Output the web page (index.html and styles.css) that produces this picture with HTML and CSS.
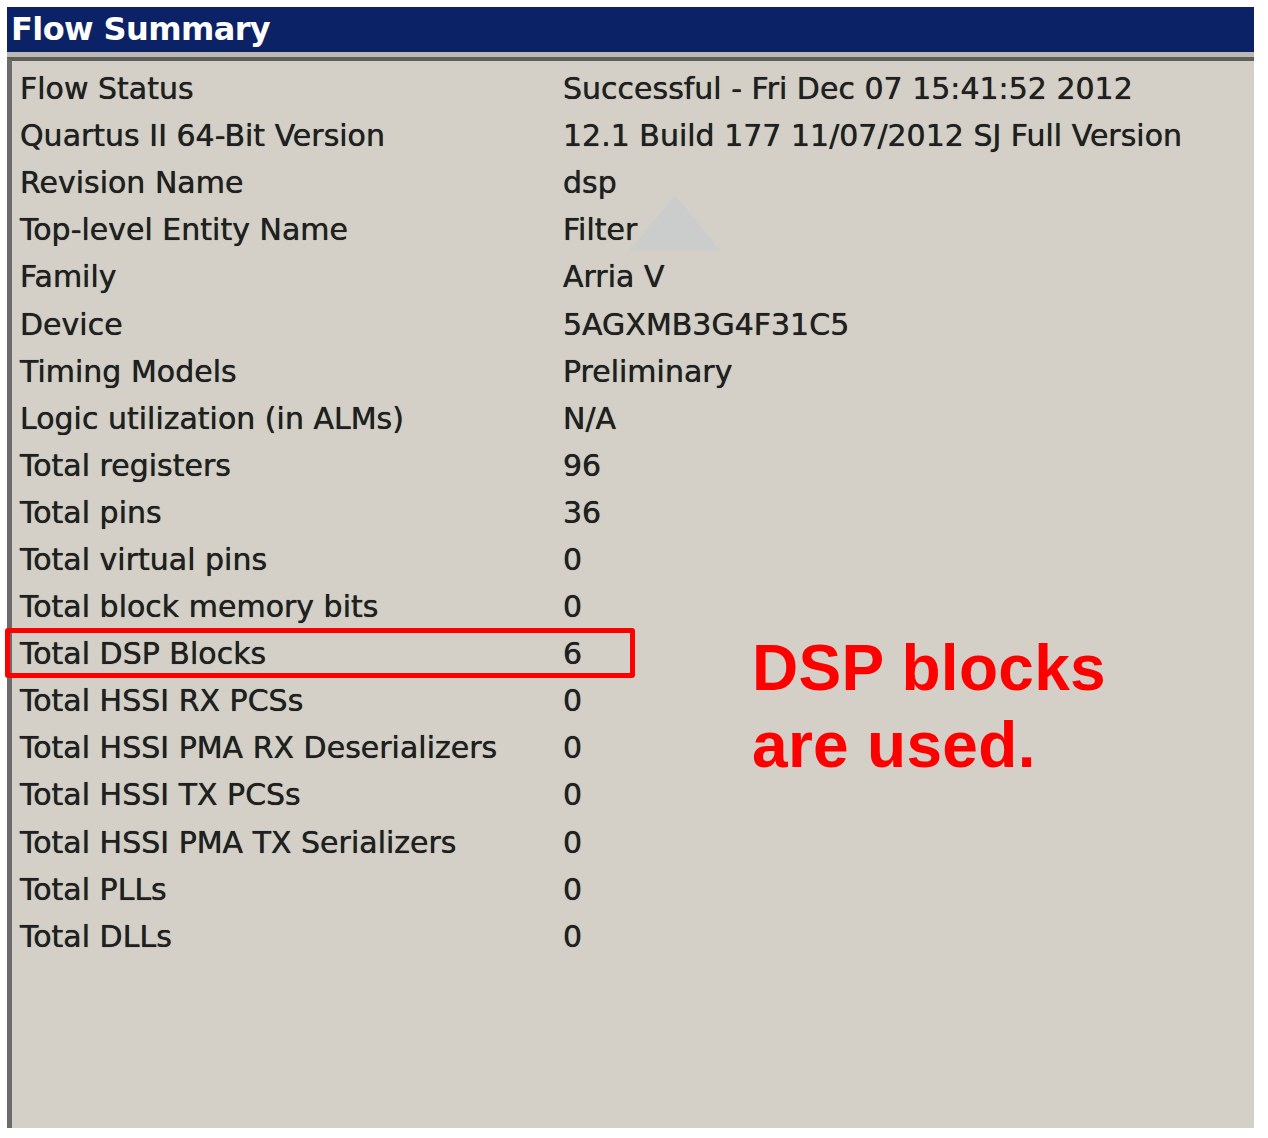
FILE: index.html
```html
<!DOCTYPE html>
<html>
<head>
<meta charset="utf-8">
<link rel="stylesheet" href="styles.css">
</head>
<body>
<div class="window">
  <div class="titlebar">Flow Summary</div>
  <div class="panel">
    <div class="table">
      <div class="row"><span class="label">Flow Status</span><span class="value">Successful - Fri Dec 07 15:41:52 2012</span></div>
      <div class="row"><span class="label">Quartus II 64-Bit Version</span><span class="value">12.1 Build 177 11/07/2012 SJ Full Version</span></div>
      <div class="row"><span class="label">Revision Name</span><span class="value">dsp</span></div>
      <div class="row"><span class="label">Top-level Entity Name</span><span class="value value-marked">Filter<span class="tri"></span></span></div>
      <div class="row"><span class="label">Family</span><span class="value">Arria V</span></div>
      <div class="row"><span class="label">Device</span><span class="value">5AGXMB3G4F31C5</span></div>
      <div class="row"><span class="label">Timing Models</span><span class="value">Preliminary</span></div>
      <div class="row"><span class="label">Logic utilization (in ALMs)</span><span class="value">N/A</span></div>
      <div class="row"><span class="label">Total registers</span><span class="value">96</span></div>
      <div class="row"><span class="label">Total pins</span><span class="value">36</span></div>
      <div class="row"><span class="label">Total virtual pins</span><span class="value">0</span></div>
      <div class="row"><span class="label">Total block memory bits</span><span class="value">0</span></div>
      <div class="row row-highlight"><span class="label">Total DSP Blocks</span><span class="value">6</span>
        <div class="note">DSP blocks<br>are used.</div>
      </div>
      <div class="row"><span class="label">Total HSSI RX PCSs</span><span class="value">0</span></div>
      <div class="row"><span class="label">Total HSSI PMA RX Deserializers</span><span class="value">0</span></div>
      <div class="row"><span class="label">Total HSSI TX PCSs</span><span class="value">0</span></div>
      <div class="row"><span class="label">Total HSSI PMA TX Serializers</span><span class="value">0</span></div>
      <div class="row"><span class="label">Total PLLs</span><span class="value">0</span></div>
      <div class="row"><span class="label">Total DLLs</span><span class="value">0</span></div>
    </div>
  </div>
</div>
</body>
</html>
```
FILE: styles.css
```css
html, body {
  margin: 0;
  padding: 0;
  background: #ffffff;
}
.window {
  margin: 7px 0 0 7px;
  width: 1247px;
}
.titlebar {
  background: #0b2267;
  color: #ffffff;
  font-family: "DejaVu Sans", "Liberation Sans", sans-serif;
  font-weight: bold;
  font-size: 32px;
  padding-left: 4px;
  letter-spacing: -0.6px;
  border-bottom: 5px solid #bdb9b1;
  box-sizing: border-box;
  height: 50px;
  line-height: 44px;
}
.panel {
  background: #d4d0c8;
  border-top: 4px solid #5e5e5e;
  border-left: 5px solid #6b6b6b;
  height: 1071px;
  box-sizing: border-box;
  padding: 4px 0 0 8px;
}
.table {
  display: flex;
  flex-direction: column;
}
.row {
  position: relative;
  display: flex;
  height: 47.1px;
  align-items: center;
  font-family: "DejaVu Sans", Verdana, sans-serif;
  font-size: 30px;
  color: #202020;
  letter-spacing: 0;
  text-shadow: 0 0 0.7px #202020;
}
.label {
  width: 543px;
  flex: none;
  white-space: nowrap;
}
.value {
  white-space: nowrap;
}
.value-marked {
  position: relative;
}
.tri {
  position: absolute;
  left: 67px;
  top: -17px;
  width: 0;
  height: 0;
  border-left: 45px solid transparent;
  border-right: 45px solid transparent;
  border-bottom: 55px solid #cbcdcd;
  z-index: 0;
}
.row-highlight::before {
  content: "";
  position: absolute;
  left: -15px;
  top: -2px;
  width: 630px;
  height: 50px;
  border: 5px solid #ff0000;
  border-radius: 3px;
  box-sizing: border-box;
}
.note {
  position: absolute;
  left: 732px;
  top: 0;
  font-family: "Liberation Sans", Arial, sans-serif;
  font-weight: bold;
  font-size: 64px;
  line-height: 77px;
  color: #ff0000;
  letter-spacing: 0.3px;
  text-shadow: none;
}
```
